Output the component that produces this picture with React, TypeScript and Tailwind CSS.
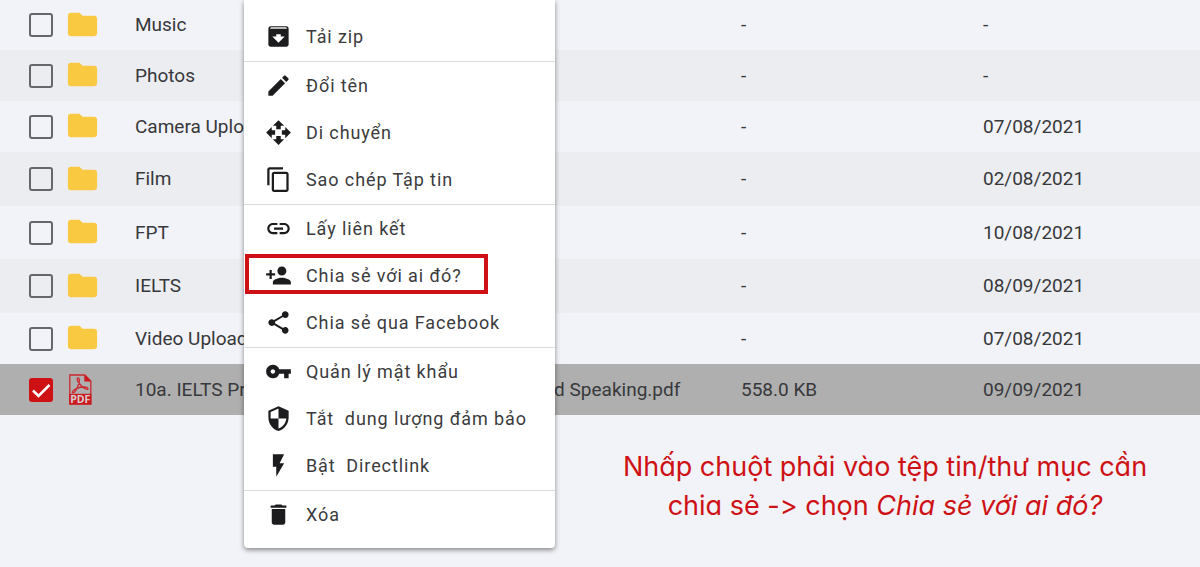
import type { ComponentType } from "react";
import {
  MdContentCopy,
  MdDelete,
  MdEdit,
  MdFlashOn,
  MdFolder,
  MdLink,
  MdOpenWith,
  MdPersonAdd,
  MdSecurity,
  MdShare,
  MdVpnKey,
} from "react-icons/md";

type Row = { name: string; size: string; date: string; height: string; pdf?: boolean };

const rows: Row[] = [
  { name: "Music", size: "-", date: "-", height: "h-[50px]" },
  { name: "Photos", size: "-", date: "-", height: "h-[51px]" },
  { name: "Camera Uploads", size: "-", date: "07/08/2021", height: "h-[51px]" },
  { name: "Film", size: "-", date: "02/08/2021", height: "h-[54px]" },
  { name: "FPT", size: "-", date: "10/08/2021", height: "h-[53px]" },
  { name: "IELTS", size: "-", date: "08/09/2021", height: "h-[54px]" },
  { name: "Video Uploads", size: "-", date: "07/08/2021", height: "h-[51px]" },
  {
    name: "10a. IELTS Practice Tests Plus 2 for the Writing and Speaking.pdf",
    size: "558.0 KB",
    date: "09/09/2021",
    height: "h-[51px]",
    pdf: true,
  },
];

function ArchiveIcon({ className }: { className?: string }) {
  return (
    <svg viewBox="0 0 24 24" className={className} aria-hidden="true">
      <path
        fill="currentColor"
        d="M5 2.800h14c1.200 0 2 .9 2 2V19c0 1.100-.9 2-2 2H5c-1.100 0-2-.9-2-2V4.800c0-1.100.8-2 2-2z"
      />
      <path fill="#b9b9ba" d="M5.300 3.600h13.400l1 1.700H4.300z" />
      <path fill="#fff" d="M12 17.500L6.500 12H10v-2h4v2h3.500z" />
    </svg>
  );
}

type Item = { label: string; icon: ComponentType<{ className?: string }>; highlighted?: boolean };

const sections: Item[][] = [
  [{ label: "Tải zip", icon: ArchiveIcon }],
  [
    { label: "Đổi tên", icon: MdEdit },
    { label: "Di chuyển", icon: MdOpenWith },
    { label: "Sao chép Tập tin", icon: MdContentCopy },
  ],
  [
    { label: "Lấy liên kết", icon: MdLink },
    { label: "Chia sẻ với ai đó?", icon: MdPersonAdd, highlighted: true },
    { label: "Chia sẻ qua Facebook", icon: MdShare },
  ],
  [
    { label: "Quản lý mật khẩu", icon: MdVpnKey },
    { label: "Tắt  dung lượng đảm bảo", icon: MdSecurity },
    { label: "Bật  Directlink", icon: MdFlashOn },
  ],
  [{ label: "Xóa", icon: MdDelete }],
];

function PdfIcon() {
  return (
    <svg viewBox="0 0 24 32" className="ml-[3px] h-8 w-6" aria-hidden="true">
      <path d="M1.800 2h15l6 6v23H1.800z" fill="none" stroke="#cb2a30" strokeWidth="1.300" />
      <path d="M16.300 1.500v7H23.400z" fill="#cb1a20" />
      <path
        d="M4.500 18.500c1.500-2.500 7-4.500 11-4.500 3 0 5 .8 4.500 2-.5 1.300-4-.5-6-2.500C11.500 11 8.500 7 9.300 5.300c.9-1.500 2.700.7 1.900 3.700-.9 3.600-3.200 8.500-4.900 10.200-1 .9-2.300.4-1.800-.7z"
        fill="none"
        stroke="#cb2a30"
        strokeWidth="1.300"
      />
      <path d="M1.200 20.800h22.200v10.700H1.200z" fill="#cb1a20" />
      <text
        x="12.300"
        y="30"
        textAnchor="middle"
        fontSize="10.500"
        fontWeight="700"
        fontFamily="Open Sans, sans-serif"
        fill="#d8d0d0"
      >
        PDF
      </text>
    </svg>
  );
}

function RowCheckbox({ name, checked }: { name: string; checked?: boolean }) {
  return (
    <span className="relative ml-[29px] block size-6">
      <input
        type="checkbox"
        aria-label={name}
        defaultChecked={checked}
        className="peer block size-6 appearance-none rounded-[3px] border-2 border-[#66676a] checked:border-[#ce1115] checked:bg-[#ce1115]"
      />
      <svg
        viewBox="0 0 24 24"
        className="pointer-events-none absolute inset-0 hidden size-6 peer-checked:block"
        aria-hidden="true"
      >
        <path d="M4 12.500l5.500 5.500L20.500 7" fill="none" stroke="#fff" strokeWidth="2.500" />
      </svg>
    </span>
  );
}

function FileTable() {
  return (
    <table className="w-full table-fixed border-collapse text-left text-[19px] leading-6 text-[#37383b]">
      <colgroup>
        <col className="w-[65px]" />
        <col className="w-[70px]" />
        <col />
        <col className="w-[242px]" />
        <col className="w-[217px]" />
      </colgroup>
      <tbody>
        {rows.map((row) => (
          <tr
            key={row.name}
            className={`${row.height} ${row.pdf ? "bg-[#afafaf]" : "odd:bg-[#f2f3f8] even:bg-[#ecedf1]"}`}
          >
            <td className="p-0">
              <RowCheckbox name={row.name} checked={row.pdf} />
            </td>
            <td className="p-0 pb-0.5">
              {row.pdf ? <PdfIcon /> : <MdFolder className="size-[35px] text-[#fac942]" />}
            </td>
            <td className="truncate p-0">{row.name}</td>
            <td className="p-0">{row.size}</td>
            <td className="p-0">{row.date}</td>
          </tr>
        ))}
      </tbody>
    </table>
  );
}

function ContextMenu() {
  return (
    <div
      role="menu"
      className="absolute top-0 left-[244px] w-[311px] rounded-b bg-white pt-[13px] pb-[9px] text-[18px] shadow-[0_2px_5px_rgba(0,0,0,0.45)]"
    >
      {sections.map((items) => (
        <div key={items[0].label} className="border-[#dcdcde] pb-px not-first:border-t">
          {items.map(({ label, icon: Icon, highlighted }) => (
            <button
              key={label}
              type="button"
              role="menuitem"
              className="relative flex h-[47px] w-full items-center gap-3.5 pl-[21px] text-left tracking-wider whitespace-pre text-[#3b3b3d]"
            >
              <Icon className="size-[27px] shrink-0 text-[#1c1c1e]" />
              {label}
              {highlighted && (
                <span className="absolute top-0.5 left-px h-10 w-[243px] border-4 border-[#ce1115]" />
              )}
            </button>
          ))}
        </div>
      ))}
    </div>
  );
}

export default function App() {
  return (
    <main className="relative min-h-screen bg-[#f2f3f8] font-['Roboto',sans-serif]">
      <FileTable />
      <ContextMenu />
      <p className="ml-[570px] pt-8 text-center font-['Inter',sans-serif] text-[27px] leading-[39px] text-[#ce1115] [font-feature-settings:'cv11','calt'_0]">
        Nhấp chuột phải vào tệp tin/thư mục cần
        <br />
        chia sẻ -&gt; chọn <em>Chia sẻ với ai đó?</em>
      </p>
    </main>
  );
}
